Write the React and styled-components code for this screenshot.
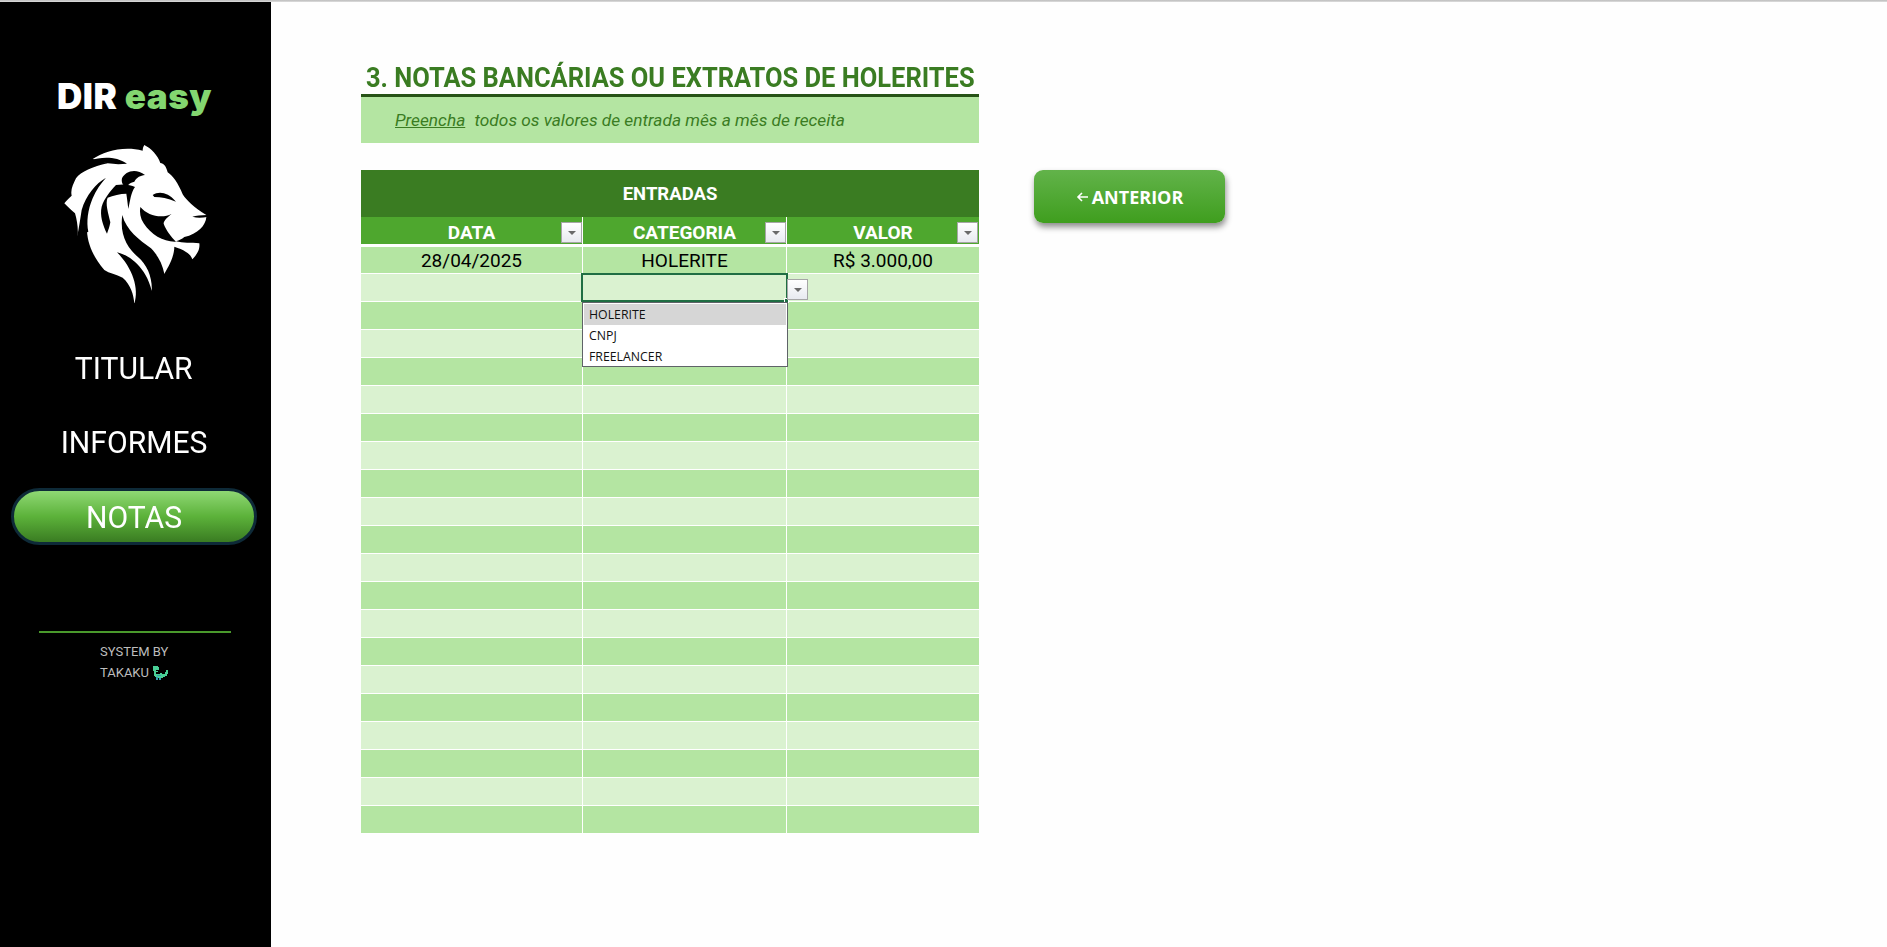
import React from 'react';
import styled, { createGlobalStyle } from 'styled-components';

const GlobalStyle = createGlobalStyle`
	html, body {
		margin: 0;
		padding: 0;
		background: #fefefe;
		font-family: Roboto, "Liberation Sans", sans-serif;
	}
`;

const ROW_COUNT = 21;

const Page = styled.div`
	width: 1887px;
	height: 947px;
	overflow: hidden;
	display: flex;
	flex-direction: column;
`;
const TopLine = styled.div`
	height: 2px;
	flex: none;
	background: linear-gradient(#bcbcbc, #dedede);
`;
const Body = styled.div`
	flex: 1;
	display: flex;
`;
const Sidebar = styled.aside`
	width: 271px;
	flex: none;
	background: #000;
	display: flex;
	flex-direction: column;
	align-items: center;
	padding-top: 74px;
	box-sizing: border-box;
`;
const Brand = styled.div`
	height: 40px;
	line-height: 40px;
	margin-right: 2px;
	font-family: Inter, "Liberation Sans", sans-serif;
	font-weight: 900;
	font-size: 35px;
	letter-spacing: 0.5px;
	color: #fff;
	white-space: nowrap;
	span {
		color: #83d670;
	}
`;
const LionMark = styled.svg`
	display: block;
	width: 170px;
	height: 180px;
	margin-top: 19px;
	filter: blur(0.4px);
`;
const Nav = styled.nav`
	width: 246px;
	margin-top: 24px;
	margin-right: 3px;
	display: flex;
	flex-direction: column;
	gap: 17.5px;
`;
const NavItem = styled.div`
	height: 57px;
	box-sizing: border-box;
	display: flex;
	align-items: center;
	justify-content: center;
	border-radius: 29px;
	color: #fff;
	font-size: 32px;
	span {
		display: inline-block;
		transform: scaleX(0.94);
	}
	${(p) =>
		p.$active &&
		`
		border: 3px solid #0e2a38;
		background: linear-gradient(#8fd874 0%, #5cb23a 50%, #3a7c22 100%);
	`}
`;
const Rule = styled.div`
	width: 192px;
	height: 2px;
	margin: 86px 0 0 -1px;
	background: #4a9a2c;
`;
const Credit = styled.div`
	margin-top: 8px;
	width: 68px;
	margin-right: 3px;
	font-size: 13px;
	line-height: 21px;
	color: #bdbdbd;
	white-space: nowrap;
	div {
		display: flex;
		align-items: center;
		gap: 3px;
	}
`;
const Main = styled.main`
	flex: 1;
	padding: 0 0 0 90px;
	display: flex;
	flex-direction: column;
`;
const Heading = styled.h1`
	width: 618px;
	height: 95px;
	box-sizing: border-box;
	margin: 0;
	padding: 61px 0 0 5px;
	border-bottom: 3px solid #275317;
	font-size: 27px;
	line-height: 30px;
	font-weight: 700;
	color: #3a7c22;
	white-space: nowrap;
	span {
		display: inline-block;
		transform: scaleX(0.943);
		transform-origin: left center;
	}
`;
const Hint = styled.div`
	width: 618px;
	height: 46px;
	box-sizing: border-box;
	padding-left: 34px;
	background: #b4e5a2;
	color: #3a7c22;
	font-size: 17.3px;
	font-style: italic;
	line-height: 46px;
	u {
		margin-right: 5px;
	}
`;
const Content = styled.div`
	margin-top: 27px;
	display: flex;
	align-items: flex-start;
	gap: 55px;
`;
const Sheet = styled.div`
	width: 618px;
`;
const SheetTitle = styled.div`
	height: 47px;
	background: #3a7c22;
	color: #fff;
	font-weight: 700;
	font-size: 18.5px;
	display: flex;
	align-items: center;
	justify-content: center;
`;
const Row = styled.div`
	display: grid;
	grid-template-columns: 222px 204px 192px;
	height: ${(p) => p.$height}px;
`;
const HeadCell = styled.div`
	position: relative;
	box-sizing: border-box;
	padding-top: 3px;
	background: #4ea72e;
	color: #fff;
	font-weight: 700;
	font-size: 19px;
	border-right: ${(p) => (p.$last ? 'none' : '1px solid #fff')};
	border-bottom: 3px solid #fff;
	display: flex;
	align-items: center;
	justify-content: center;
`;
const Cell = styled.div`
	position: relative;
	z-index: ${(p) => (p.$raised ? 2 : 'auto')};
	background: ${(p) => (p.$alt ? '#daf2d0' : '#b4e5a2')};
	border-right: ${(p) => (p.$last ? 'none' : '1px solid #fff')};
	border-bottom: 1px solid #fff;
	color: #000;
	font-size: 19px;
	display: flex;
	align-items: center;
	justify-content: center;
`;
const FilterButton = styled.div`
	position: absolute;
	right: ${(p) => p.$right || 0}px;
	top: ${(p) => p.$top ?? 5}px;
	width: 21px;
	height: 21px;
	box-sizing: border-box;
	border: 1px solid #a6a6a6;
	background: linear-gradient(#fff, #e8eaf0);
	display: flex;
	align-items: center;
	justify-content: center;
	&::after {
		content: '';
		border-left: 4px solid transparent;
		border-right: 4px solid transparent;
		border-top: 4px solid #6a6a6a;
	}
`;
const ActiveOutline = styled.div`
	position: absolute;
	left: -2px;
	top: -1px;
	right: -2px;
	bottom: -1px;
	border: 2px solid #1f6e43;
	&::after {
		content: '';
		position: absolute;
		right: -3px;
		bottom: -3px;
		width: 5px;
		height: 5px;
		background: #1f6e43;
		border: 1px solid #fff;
		box-sizing: border-box;
	}
`;
const Dropdown = styled.ul`
	position: absolute;
	left: -1px;
	top: 28px;
	width: 206px;
	height: 65px;
	box-sizing: border-box;
	margin: 0;
	padding: 1px;
	list-style: none;
	background: #fff;
	border: 1px solid #5f6368;
	z-index: 3;
`;
const Option = styled.li`
	height: 21px;
	line-height: 21px;
	padding-left: 5px;
	font-family: "Open Sans", "Noto Sans", sans-serif;
	font-size: 12.3px;
	color: #111;
	background: ${(p) => (p.$hover ? '#d6d6d6' : 'transparent')};
`;
const BackButton = styled.button`
	width: 191px;
	height: 53px;
	border: none;
	border-radius: 9px;
	background: linear-gradient(#62b34a, #3f9e1e);
	box-shadow: 1px 4px 6px rgba(0, 0, 0, 0.45);
	color: #fff;
	font-family: "Open Sans", "Noto Sans", sans-serif;
	font-weight: 700;
	font-size: 18px;
	display: flex;
	align-items: center;
	justify-content: center;
	gap: 3px;
	padding: 0;
	svg {
		margin-top: 1px;
	}
`;

function Lion() {
	return (
		<LionMark viewBox="0 0 510 540">
			<path
				fill="#fff"
				d="M125 72 C160 50 215 32 275 47 C275 40 277 35 280 30 C300 40 320 60 328 84 C338 85 346 94 350 112 C365 122 382 145 395 178 C405 195 430 218 466 240 L466 246 C465 270 440 298 400 306 C392 312 385 316 375 319 C395 325 420 322 445 325 C448 345 435 362 424 373 C418 355 400 345 370 335 C370 362 355 392 340 416 L302 466 L250 505 C248 480 240 450 215 428 C195 418 175 415 160 405 C130 370 110 330 108 288 L80 302 C82 280 78 255 72 235 C60 225 50 215 40 205 C48 195 56 188 62 182 C58 165 66 148 75 130 C90 110 125 95 170 85 C155 80 140 76 125 72 Z"
			/>
			<g fill="#000">
				<path d="M118 75 C150 66 195 62 228 86 C208 88 190 88 170 85 C150 82 130 78 118 75 Z" />
				<path d="M213 130 C222 108 255 98 282 120 C268 122 258 126 250 140 C240 142 232 146 226 158 C216 152 210 142 213 130 Z" />
				<path d="M165 128 C135 145 105 180 92 225 C88 250 84 280 78 306 L112 290 C106 262 110 225 125 190 C135 165 150 145 165 128 Z" />
				<path d="M195 150 C220 146 240 150 252 156 C240 172 238 195 232 222 C230 205 228 190 226 176 C208 176 186 182 170 188 C162 205 172 235 178 262 C176 275 172 285 168 296 C155 270 146 240 152 215 C160 190 178 168 195 150 Z" />
				<path d="M268 216 C290 243 335 252 362 236 C345 250 338 258 338 266 C345 285 360 305 375 320 C340 322 300 300 278 265 C268 250 265 232 268 216 Z" />
				<path d="M214 240 C225 285 265 315 300 340 C322 362 335 390 340 416 L345 450 L302 470 C305 430 290 390 260 365 C230 340 205 300 214 240 Z" />
				<path d="M198 352 C240 362 285 400 302 466 L280 510 L250 507 C265 460 245 400 198 352 Z" />
				<path d="M305 180 C325 168 350 172 375 200 C350 190 330 186 310 186 Z" />
				<path d="M424 245 C435 241 450 241 468 240 L468 246 C455 248 440 250 424 245 Z" />
			</g>
		</LionMark>
	);
}

function Dino() {
	return (
		<svg width="16" height="14" viewBox="0 0 16 14">
			<path
				fill="#49cf96"
				d="M1 0h5v1h1v3H4v1h2v1H4v2h4V7h2v1h3V6h1V4h2v4h-1v2h-2v1h-2v1H9v2H7v-2H6v2H4v-3H3v-1H2V5H1z"
			/>
			<path fill="#2f9fb0" d="M4 11h2v3H4zM7 12h2v2H7zM5 9h4v1H5z" />
		</svg>
	);
}

function BackArrow() {
	return (
		<svg width="13" height="12" viewBox="0 0 13 12">
			<path d="M12 6H2M6 2 2 6l4 4" fill="none" stroke="#fff" strokeWidth="1.6" />
		</svg>
	);
}

const rows = Array.from({ length: ROW_COUNT }, (_, i) => i);

export default function App() {
	return (
		<Page>
			<GlobalStyle />
			<TopLine />
			<Body>
				<Sidebar>
					<Brand>
						DIR <span>easy</span>
					</Brand>
					<Lion />
					<Nav>
						<NavItem><span>TITULAR</span></NavItem>
						<NavItem><span>INFORMES</span></NavItem>
						<NavItem $active><span>NOTAS</span></NavItem>
					</Nav>
					<Rule />
					<Credit>
						SYSTEM BY
						<div>
							TAKAKU <Dino />
						</div>
					</Credit>
				</Sidebar>
				<Main>
					<Heading><span>3. NOTAS BANCÁRIAS OU EXTRATOS DE HOLERITES</span></Heading>
					<Hint>
						<u>Preencha</u> todos os valores de entrada mês a mês de receita
					</Hint>
					<Content>
						<Sheet>
							<SheetTitle>ENTRADAS</SheetTitle>
							<Row $height={30}>
								<HeadCell>
									DATA
									<FilterButton />
								</HeadCell>
								<HeadCell>
									CATEGORIA
									<FilterButton />
								</HeadCell>
								<HeadCell $last>
									VALOR
									<FilterButton $right={1} />
								</HeadCell>
							</Row>
							{rows.map((i) => (
								<Row key={i} $height={i === 0 ? 27 : 28}>
									<Cell $alt={i % 2 === 1}>{i === 0 && '28/04/2025'}</Cell>
									<Cell $alt={i % 2 === 1} $raised={i === 1}>
										{i === 0 && 'HOLERITE'}
										{i === 1 && (
											<>
												<ActiveOutline />
												<FilterButton $right={-22} $top={5} />
												<Dropdown>
													<Option $hover>HOLERITE</Option>
													<Option>CNPJ</Option>
													<Option>FREELANCER</Option>
												</Dropdown>
											</>
										)}
									</Cell>
									<Cell $alt={i % 2 === 1} $last>
										{i === 0 && 'R$ 3.000,00'}
									</Cell>
								</Row>
							))}
						</Sheet>
						<BackButton>
							<BackArrow />
							ANTERIOR
						</BackButton>
					</Content>
				</Main>
			</Body>
		</Page>
	);
}
